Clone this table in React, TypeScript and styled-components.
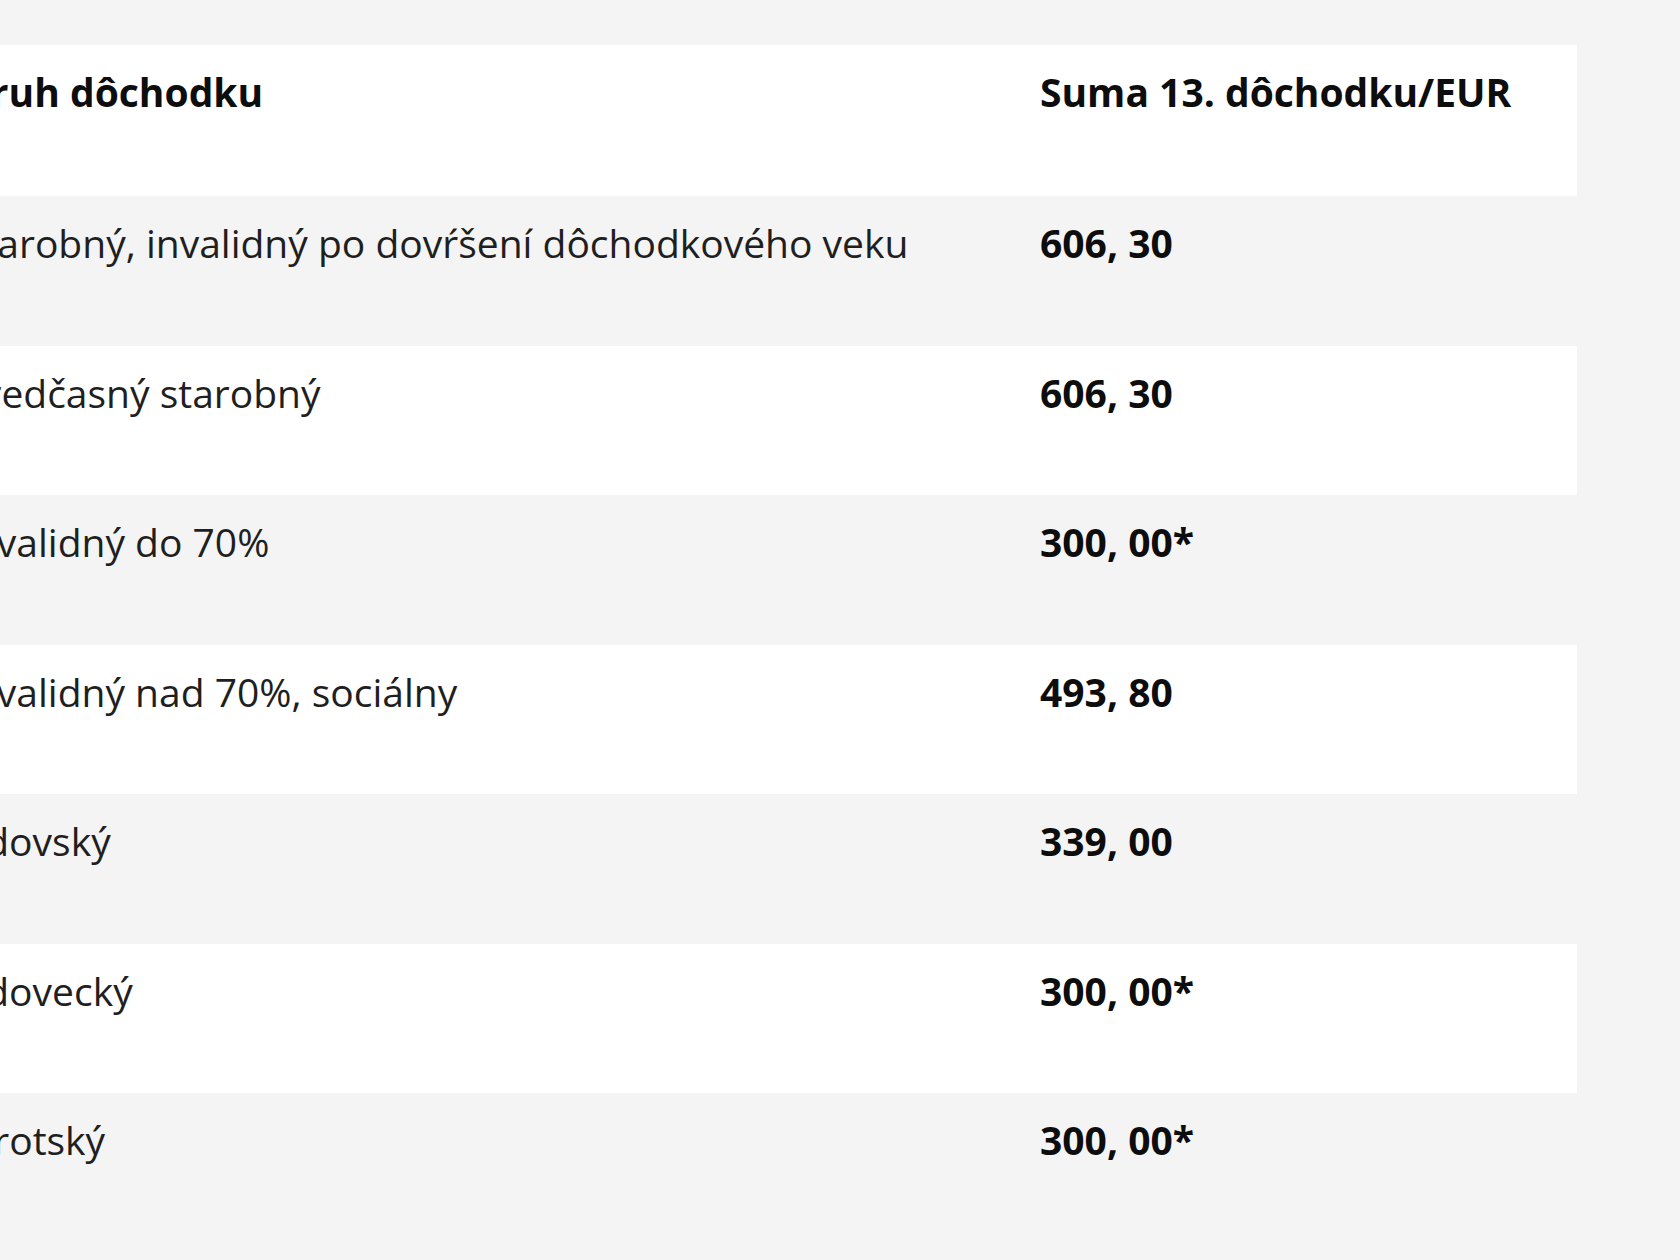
import React from "react";
import styled, { createGlobalStyle } from "styled-components";

const GlobalStyle = createGlobalStyle`
  html, body {
    margin: 0;
    padding: 0;
    background: #f4f4f4;
    overflow: hidden;
  }
  body {
    font-family: "Open Sans", "Noto Sans", sans-serif;
    color: #1c1c1c;
  }
`;

const rows = [
  { type: "Starobný, invalidný po dovŕšení dôchodkového veku", sum: "606, 30" },
  { type: "Predčasný starobný", sum: "606, 30" },
  { type: "Invalidný do 70%", sum: "300, 00*" },
  { type: "Invalidný nad 70%, sociálny", sum: "493, 80" },
  { type: "Vdovský", sum: "339, 00" },
  { type: "Vdovecký", sum: "300, 00*" },
  { type: "Sirotský", sum: "300, 00*" },
];

function App() {
  // display table header
  const displayHeader = () => {
    return (
      <Row $white $head>
        <Cell $bold>Druh dôchodku</Cell>
        <Cell $bold>Suma 13. dôchodku/EUR</Cell>
      </Row>
    );
  };

  // display table body rows
  const displayRows = () => {
    return rows.map((row, i) => (
      <Row key={row.type} $white={i % 2 === 1}>
        <Cell>{row.type}</Cell>
        <Cell $bold>{row.sum}</Cell>
      </Row>
    ));
  };

  /* ********** Main return statement of this component ********** */
  return (
    <Page>
      <GlobalStyle />
      <Table>
        {displayHeader()}
        {displayRows()}
      </Table>
    </Page>
  );
}

export default App;

const Page = styled.div`
  padding-top: 45px;
  height: 1215px;
`;

const Table = styled.div`
  margin-left: -67px;
  width: 1644px;
  display: flex;
  flex-direction: column;
`;

const Row = styled.div<{ $white?: boolean; $head?: boolean }>`
  display: grid;
  grid-template-columns: 1078px 1fr;
  height: ${(p) => (p.$head ? "151px" : "149.5px")};
  background: ${(p) => (p.$white ? "#ffffff" : "#f4f4f4")};
`;

const Cell = styled.div<{ $bold?: boolean }>`
  padding: 23px 0 0 29px;
  font-size: 39px;
  line-height: 48px;
  font-weight: ${(p) => (p.$bold ? 700 : 400)};
  color: ${(p) => (p.$bold ? "#0d0d0d" : "#1f1f1f")};
  white-space: nowrap;
`;
